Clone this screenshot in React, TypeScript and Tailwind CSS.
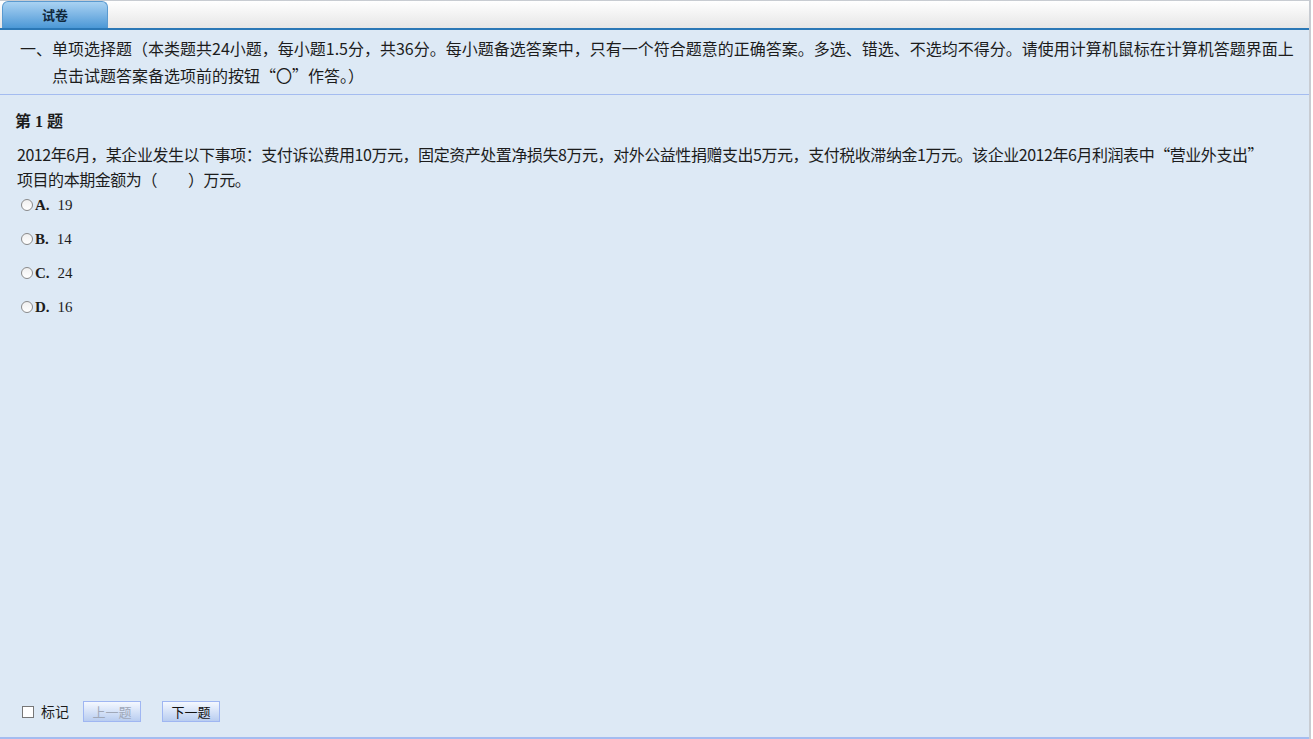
import React from "react";

const options = [
  { key: "A", text: "19" },
  { key: "B", text: "14" },
  { key: "C", text: "24" },
  { key: "D", text: "16" },
];

export default function App() {
  return (
    <div className="w-[1313px] h-[739px] bg-white font-['Noto_Sans_CJK_SC',sans-serif] text-[#1c1c1c]">
      <div className="w-[1311px] h-[739px] flex flex-col border-r-2 border-[#c8ccd2] bg-[#dde9f5]">
        {/* tab strip */}
        <div className="h-[28px] flex items-end bg-gradient-to-b from-[#ffffff] to-[#e6e6e6] border-t border-[#c8ccd2] pl-[2px]">
          <div className="w-[106px] h-[27px] rounded-t-[6px] bg-gradient-to-b from-[#a9d2f2] to-[#4b98d6] border border-b-0 border-[#5a9ad0] flex items-center justify-center text-[13px] font-bold text-[#10283c]">
            试卷
          </div>
        </div>
        <div className="h-[2px] bg-[#2b78b6]" />

        {/* section header */}
        <div className="border-b border-[#a4bcf0] pt-[5px] pb-[5px] pl-[20px] pr-[10px] text-[16px] leading-[27px] flex">
          <span className="shrink-0">一、</span>
          <span>
            单项选择题（本类题共24小题，每小题1.5分，共36分。每小题备选答案中，只有一个符合题意的正确答案。多选、错选、不选均不得分。请使用计算机鼠标在计算机答题界面上点击试题答案备选项前的按钮“〇”作答。）
          </span>
        </div>

        {/* question */}
        <div className="flex-1 flex flex-col px-[17px] pt-[16px]">
          <div className="text-[16px] font-bold leading-[22px] font-['Liberation_Serif','Noto_Sans_CJK_SC',serif] -ml-[2px]">第 1 题</div>
          <div className="mt-[9px] text-[16px] leading-[25px] tracking-[-0.45px]">
            <div className="whitespace-nowrap">
              2012年6月，某企业发生以下事项：支付诉讼费用10万元，固定资产处置净损失8万元，对外公益性捐赠支出5万元，支付税收滞纳金1万元。该企业2012年6月利润表中“营业外支出”
            </div>
            <div>项目的本期金额为（　　）万元。</div>
          </div>
          <div className="mt-[5px] flex flex-col gap-[18px] pl-[4px]">
            {options.map((o) => (
              <label key={o.key} className="flex items-center h-[16px] text-[15px] font-['Liberation_Serif',serif]">
                <span className="w-[12px] h-[12px] rounded-full border border-[#8a8a8a] bg-gradient-to-b from-[#f0f0f0] to-[#ffffff] mr-[2px]" />
                <span className="font-bold">{o.key}.</span>
                <span className="ml-[8px]">{o.text}</span>
              </label>
            ))}
          </div>
        </div>

        {/* footer */}
        <div className="h-[38px] border-b-2 border-[#a4bcf0] flex items-start pl-[22px]">
          <div className="flex items-center h-[21px]">
            <span className="w-[12px] h-[12px] border border-[#777] bg-white" />
            <span className="ml-[7px] text-[14px]">标记</span>
            <button className="ml-[14px] w-[58px] h-[21px] border border-[#9fb6f2] bg-gradient-to-b from-[#f4f8ff] to-[#b9cdf0] text-[13px] text-[#a0a8b8]">
              上一题
            </button>
            <button className="ml-[21px] w-[58px] h-[21px] border border-[#9fb6f2] bg-gradient-to-b from-[#f4f8ff] to-[#b9cdf0] text-[13px] text-[#111]">
              下一题
            </button>
          </div>
        </div>
      </div>
    </div>
  );
}
